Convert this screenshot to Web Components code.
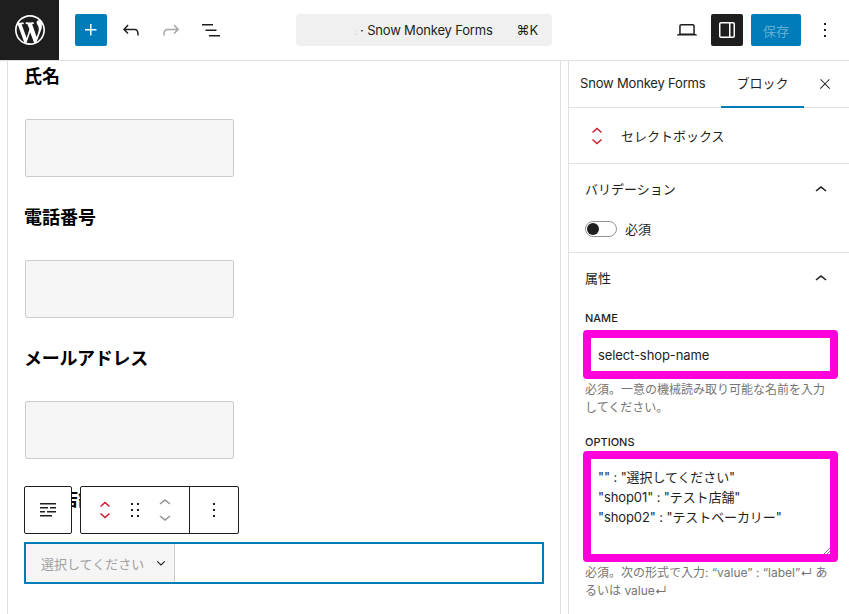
<!DOCTYPE html>
<html lang="ja">
<head>
<meta charset="utf-8">
<title>Snow Monkey Forms</title>
<style>
  html, body { margin: 0; height: 100%; overflow: hidden; background: #fff; }
  body { font-family: Inter, "Noto Sans CJK JP", sans-serif; font-size: 13px; color: #1e1e1e; }
  #app { display: flex; flex-direction: column; width: 849px; height: 614px; overflow: hidden; }
  #main { display: grid; grid-template-columns: 568px 281px; flex: 1; min-height: 0; }
</style>
</head>
<body>
<div id="app">
  <wp-header></wp-header>
  <div id="main">
    <form-canvas>
      <form-field label="氏名"></form-field>
      <form-field label="電話番号"></form-field>
      <form-field label="メールアドレス" style="letter-spacing:-.3px"></form-field>
      <select-field label="希望店舗"></select-field>
    </form-canvas>
    <block-sidebar>
      <side-panel title="バリデーション">
        <toggle-row label="必須"></toggle-row>
      </side-panel>
      <side-panel title="属性" last>
        <attr-field label="NAME" gap="4" help="必須。一意の機械読み取り可能な名前を入力してください。" box-height="33">select-shop-name</attr-field>
        <attr-field label="OPTIONS" gap="1" help="必須。次の形式で入力: “value” : “label”↵ あるいは value↵" box-height="95" multi>"" : "選択してください"
"shop01" : "テスト店舗"
"shop02" : "テストベーカリー"</attr-field>
      </side-panel>
    </block-sidebar>
  </div>
</div>

<script>
const icon = (d, size = 24, box = '0 0 24 24', fill = 'currentColor') =>
  `<svg xmlns="http://www.w3.org/2000/svg" width="${size}" height="${size}" viewBox="${box}" fill="${fill}" aria-hidden="true" style="flex:none"><path d="${d}"/></svg>`;

const ICONS = {
  wp: 'M20 10c0-5.51-4.49-10-10-10C4.48 0 0 4.49 0 10c0 5.52 4.48 10 10 10 5.51 0 10-4.48 10-10zM7.78 15.37L4.37 6.22c.55-.02 1.17-.08 1.17-.08.5-.06.44-1.13-.06-1.11 0 0-1.45.11-2.37.11-.18 0-.37 0-.58-.01C4.12 2.69 6.87 1.11 10 1.11c2.33 0 4.45.87 6.05 2.34-.68-.11-1.65.39-1.65 1.58 0 .74.45 1.36.9 2.1.35.61.55 1.36.55 2.46 0 1.49-1.4 5-1.4 5l-3.03-8.37c.54-.02.82-.17.82-.17.5-.05.44-1.25-.06-1.22 0 0-1.44.12-2.38.12-.87 0-2.33-.12-2.33-.12-.5-.03-.56 1.2-.06 1.22l.92.08 1.26 3.41zM17.41 10c.24-.64.74-1.87.43-4.25.7 1.29 1.05 2.71 1.05 4.25 0 3.29-1.73 6.24-4.4 7.78.97-2.59 1.94-5.2 2.92-7.78zM6.1 18.09C3.12 16.65 1.11 13.53 1.11 10c0-1.3.23-2.48.72-3.59C3.25 10.3 4.67 14.2 6.1 18.09zm4.03-6.63l2.58 6.98c-.86.29-1.76.45-2.71.45-.79 0-1.57-.11-2.29-.33.81-2.38 1.62-4.74 2.42-7.1z',
  plus: 'M11 12.5V17.5H12.5V12.5H17.5V11H12.5V6H11V11H6V12.5H11Z',
  undo: 'M18.3 11.7c-.6-.6-1.4-.9-2.3-.9H6.7l2.9-3.3-1.1-1-4.5 5L8.5 16l1-1-2.7-2.7H16c.5 0 .9.2 1.3.5 1 1 1 3.4 1 4.5v.3h1.5v-.2c0-1.5 0-4.3-1.5-5.7z',
  redo: 'M15.6 6.5l-1.1 1 2.9 3.3H8c-.9 0-1.7.3-2.3.9-1.4 1.5-1.4 4.2-1.4 5.6v.2h1.5v-.3c0-1.1 0-3.5 1-4.5.3-.3.7-.5 1.3-.5h9.2L14.5 15l1.1 1.1 4.6-4.6-4.6-5z',
  list: 'M3 6h11v1.5H3V6zm3.5 5.5h11V13h-11v-1.5zM21 17H10v1.5h11V17z',
  laptop: 'M20.5 16h-.7V8c0-1.1-.9-2-2-2H6.2c-1.1 0-2 .9-2 2v8h-.7c-.8 0-1.5.7-1.5 1.5h20c0-.8-.7-1.5-1.5-1.5zM5.7 8c0-.3.2-.5.5-.5h11.6c.3 0 .5.2.5.5v7.6H5.7V8z',
  drawer: 'M18 4H6c-1.1 0-2 .9-2 2v12c0 1.1.9 2 2 2h12c1.1 0 2-.9 2-2V6c0-1.1-.9-2-2-2zm-4 14.5H6c-.3 0-.5-.2-.5-.5V6c0-.3.2-.5.5-.5h8v13zm4.5-.5c0 .3-.2.5-.5.5h-2.5v-13H18c.3 0 .5.2.5.5v12z',
  more: 'M13 19h-2v-2h2v2zm0-6h-2v-2h2v2zm0-6h-2V5h2v2z',
  close: 'M13 11.8l6.1-6.3-1-1-6.1 6.2-6.1-6.2-1 1 6.1 6.3-6.5 6.7 1 1 6.5-6.6 6.5 6.6 1-1z',
  up: 'M6.5 12.4L12 8l5.5 4.4-.9 1.2L12 10l-4.5 3.6-1-1.2z',
  drag: 'M8 7h2V5H8v2zm0 6h2v-2H8v2zm0 6h2v-2H8v2zm6-14v2h2V5h-2zm0 8h2v-2h-2v2zm0 6h2v-2h-2v2z',
  lines: 'M4 5h16v1.5H4zM4 9h8v1.5H4zM14 9h6v1.5h-6zM4 13h5v1.5H4zM11 13h9v1.5h-9zM4 17h12v1.5H4z'
};

// red double chevron used for the select block
const SELECT_ICON = `<svg xmlns="http://www.w3.org/2000/svg" width="24" height="24" viewBox="0 0 24 24" fill="none" stroke="#cd162c" stroke-width="1.5" style="flex:none"><path d="M7.5 8.5 12 4.5l4.5 4M7.5 15.5l4.5 4 4.5-4"/></svg>`;

class WpHeader extends HTMLElement {
  constructor() {
    super();
    this.attachShadow({ mode: 'open' });
    this.shadowRoot.innerHTML = `
      <style>
        :host { display: flex; align-items: center; height: 60px; flex: none; border-bottom: 1px solid #e0e0e0; background: #fff; box-sizing: content-box; }
        .logo { width: 59px; height: 60px; background: #1e1e1e; color: #fff; display: flex; align-items: center; justify-content: center; flex: none; }
        .tools { display: flex; align-items: center; margin-left: 16px; gap: 8px; width: 221px; flex: none; }
        .btn { width: 32px; height: 32px; border-radius: 2px; display: flex; align-items: center; justify-content: center; flex: none; }
        .add { background: #007cba; color: #fff; }
        .off { color: #a7a7a7; }
        .cmd { width: 256px; height: 32px; background: #f0f0f0; border-radius: 4px; flex: none; display: flex; align-items: center; justify-content: flex-end; padding: 0 14px 0 0; box-sizing: border-box; font-size: 13px; color: #1e1e1e; gap: 24px; letter-spacing: -.18px; }
        .blur { color: #c8c8c8; font-size: 9px; margin-right: 3px; }
        .actions { display: flex; align-items: center; margin-left: auto; padding-right: 8px; }
        .on { background: #1e1e1e; color: #fff; margin-left: 8px; }
        .save { background: #007cba; color: rgba(255,255,255,.4); width: 50px; height: 32px; border-radius: 2px; margin-left: 8px; display: flex; align-items: center; justify-content: center; font-size: 13px; }
        .menu { margin-left: 8px; }
      </style>
      <div class="logo">${icon(ICONS.wp, 30, '0 0 20 20')}</div>
      <div class="tools">
        <span class="btn add">${icon(ICONS.plus)}</span>
        <span class="btn">${icon(ICONS.undo)}</span>
        <span class="btn off">${icon(ICONS.redo)}</span>
        <span class="btn">${icon(ICONS.list)}</span>
      </div>
      <div class="cmd"><span><span class="blur">:</span>· Snow Monkey Forms</span><span>⌘K</span></div>
      <div class="actions">
        <span class="btn">${icon(ICONS.laptop)}</span>
        <span class="btn on">${icon(ICONS.drawer)}</span>
        <span class="save">保存</span>
        <span class="btn menu">${icon(ICONS.more)}</span>
      </div>`;
  }
}

class FormCanvas extends HTMLElement {
  constructor() {
    super();
    this.attachShadow({ mode: 'open' });
    this.shadowRoot.innerHTML = `
      <style>
        :host { display: block; position: relative; overflow: hidden; }
        .frame { margin-left: 7px; width: 554px; height: 100%; box-sizing: border-box; border-left: 1px solid #e0e0e0; border-right: 1px solid #e0e0e0; padding: 0 16px; display: flex; flex-direction: column; gap: 0; }
      </style>
      <div class="frame"><slot></slot></div>`;
  }
}

class FormField extends HTMLElement {
  constructor() {
    super();
    this.attachShadow({ mode: 'open' });
    this.shadowRoot.innerHTML = `
      <style>
        :host { display: block; height: 141px; }
        h2 { margin: 0; font-size: 18px; line-height: 32px; font-weight: 700; color: #000; }
        .box { margin: 26px 0 0 1px; width: 209px; height: 58px; box-sizing: border-box; background: #f5f5f5; border: 1px solid #ccc; border-radius: 2px; }
      </style>
      <h2>${this.getAttribute('label')}</h2>
      <div class="box"></div>`;
  }
}

class SelectField extends HTMLElement {
  constructor() {
    super();
    this.attachShadow({ mode: 'open' });
    this.shadowRoot.innerHTML = `
      <style>
        :host { display: block; position: relative; }
        h2 { margin: 0; font-size: 18px; line-height: 32px; font-weight: 700; color: #000; }
        .wrap { margin-top: 26px; width: 520px; height: 42px; box-sizing: border-box; border: 2px solid #007cba; display: flex; }
        .sel { width: 149px; box-sizing: border-box; background: #f5f5f5; border-right: 1px solid #ccc; display: flex; align-items: center; justify-content: space-between; padding: 0 7px 0 15px; font-size: 13px; color: #a0a0a0; }
        .sel svg { color: #1e1e1e; }
        .bar { position: absolute; left: 0; top: 2px; display: flex; gap: 8px; }
        .group { display: flex; height: 48px; box-sizing: border-box; border: 1px solid #1e1e1e; border-radius: 2px; background: #fff; color: #1e1e1e; }
        .cell { display: flex; align-items: center; justify-content: center; height: 100%; flex: none; }
        .mover { display: flex; flex-direction: column; color: #949494; }
        .mover svg { display: block; margin: -5px 0; }
        .flip { display: block; transform: scaleY(-1); }
        .sep { border-left: 1px solid #1e1e1e; }
      </style>
      <h2>${this.getAttribute('label')}</h2>
      <div class="wrap">
        <div class="sel"><span>選択してください</span><svg width="12" height="12" viewBox="0 0 12 12" fill="none" stroke="currentColor" stroke-width="1.1"><path d="M2.2 4.4 6 8 9.8 4.4"/></svg></div>
      </div>
      <div class="bar">
        <div class="group"><div class="cell" style="width:46px">${icon(ICONS.lines)}</div></div>
        <div class="group">
          <div class="cell" style="width:48px">${SELECT_ICON}</div>
          <div class="cell" style="width:12px">${icon(ICONS.drag)}</div>
          <div class="cell" style="width:48px"><div class="mover">${icon(ICONS.up)}<span class="flip">${icon(ICONS.up)}</span></div></div>
          <div class="cell sep" style="width:48px">${icon(ICONS.more)}</div>
        </div>
      </div>`;
  }
}

class BlockSidebar extends HTMLElement {
  constructor() {
    super();
    this.attachShadow({ mode: 'open' });
    this.shadowRoot.innerHTML = `
      <style>
        :host { display: block; overflow: hidden; background: #fff; border-left: 1px solid #e0e0e0; }
        .tabs { display: flex; height: 47px; box-sizing: border-box; border-bottom: 1px solid #e0e0e0; align-items: stretch; }
        .tab { display: flex; align-items: center; font-size: 13px; padding-bottom: 2px; box-sizing: border-box; }
        .tab.a { width: 152px; padding-left: 11px; letter-spacing: -.18px; }
        .tab.b { width: 83px; justify-content: center; box-shadow: inset 0 -2px 0 #007cba; margin-bottom: -1px; padding-bottom: 4px; }
        .x { margin-left: 13px; display: flex; align-items: center; }
        .card { display: flex; align-items: center; height: 56px; box-sizing: border-box; border-bottom: 1px solid #e0e0e0; padding-left: 16px; gap: 12px; font-size: 13px; }
      </style>
      <div class="tabs">
        <div class="tab a">Snow Monkey Forms</div>
        <div class="tab b">ブロック</div>
        <div class="x">${icon(ICONS.close, 16)}</div>
      </div>
      <div class="card">${SELECT_ICON}<span>セレクトボックス</span></div>
      <slot></slot>`;
  }
}

class SidePanel extends HTMLElement {
  constructor() {
    super();
    this.attachShadow({ mode: 'open' });
    this.shadowRoot.innerHTML = `
      <style>
        :host { display: block; border-bottom: 1px solid #e0e0e0; }
        :host([last]) { border-bottom: 0; }
        .head { display: flex; align-items: center; justify-content: space-between; height: 50px; box-sizing: border-box; padding: 0 16px 2px; font-size: 13px; }
        .head svg { margin-top: 4px; }
        .body { padding: 7px 16px 15px; }
      </style>
      <div class="head"><span>${this.getAttribute('title')}</span>${icon(ICONS.up)}</div>
      <div class="body"><slot></slot></div>`;
  }
}

class ToggleRow extends HTMLElement {
  constructor() {
    super();
    this.attachShadow({ mode: 'open' });
    this.shadowRoot.innerHTML = `
      <style>
        :host { display: flex; align-items: center; gap: 8px; height: 16px; font-size: 13px; }
        .track { width: 32px; height: 16px; box-sizing: border-box; border: 1px solid #949494; border-radius: 8px; position: relative; flex: none; background: #fff; }
        .knob { position: absolute; left: 1px; top: 1px; width: 12px; height: 12px; border-radius: 50%; background: #1e1e1e; }
        .text { margin-top: -2px; }
      </style>
      <span class="track"><span class="knob"></span></span><span class="text">${this.getAttribute('label')}</span>`;
  }
}

class AttrField extends HTMLElement {
  constructor() {
    super();
    this.attachShadow({ mode: 'open' });
    const h = this.getAttribute('box-height');
    this.shadowRoot.innerHTML = `
      <style>
        :host { display: block; margin-bottom: 17px; }
        .label { font-size: 11px; line-height: 16px; font-weight: 500; margin-bottom: ${this.getAttribute('gap')}px; }
        .outer { margin: 0 -5px 0 -2px; border: 8px solid #ff00dc; border-radius: 4px; background: #fff; position: relative; }
        .box { height: ${h}px; box-sizing: border-box; padding: 0 7px; font-size: 13px; color: #1e1e1e; letter-spacing: -.1px; display: flex; align-items: center; }
        :host([multi]) .box { display: block; padding-top: 8px; line-height: 20px; white-space: pre-wrap; }
        .grip { position: absolute; right: 0; bottom: 0; }
        .help { margin-top: 2px; font-size: 12px; line-height: 18px; color: #757575; }
      </style>
      <div class="label">${this.getAttribute('label')}</div>
      <div class="outer"><div class="box"><slot></slot></div>${this.hasAttribute('multi') ? '<svg class="grip" width="7" height="7" viewBox="0 0 7 7" stroke="#777" fill="none"><path d="M7 1 1 7M7 4 4 7"/></svg>' : ''}</div>
      <div class="help">${this.getAttribute('help')}</div>`;
  }
}

customElements.define('wp-header', WpHeader);
customElements.define('form-canvas', FormCanvas);
customElements.define('form-field', FormField);
customElements.define('select-field', SelectField);
customElements.define('block-sidebar', BlockSidebar);
customElements.define('side-panel', SidePanel);
customElements.define('toggle-row', ToggleRow);
customElements.define('attr-field', AttrField);
</script>
</body>
</html>
